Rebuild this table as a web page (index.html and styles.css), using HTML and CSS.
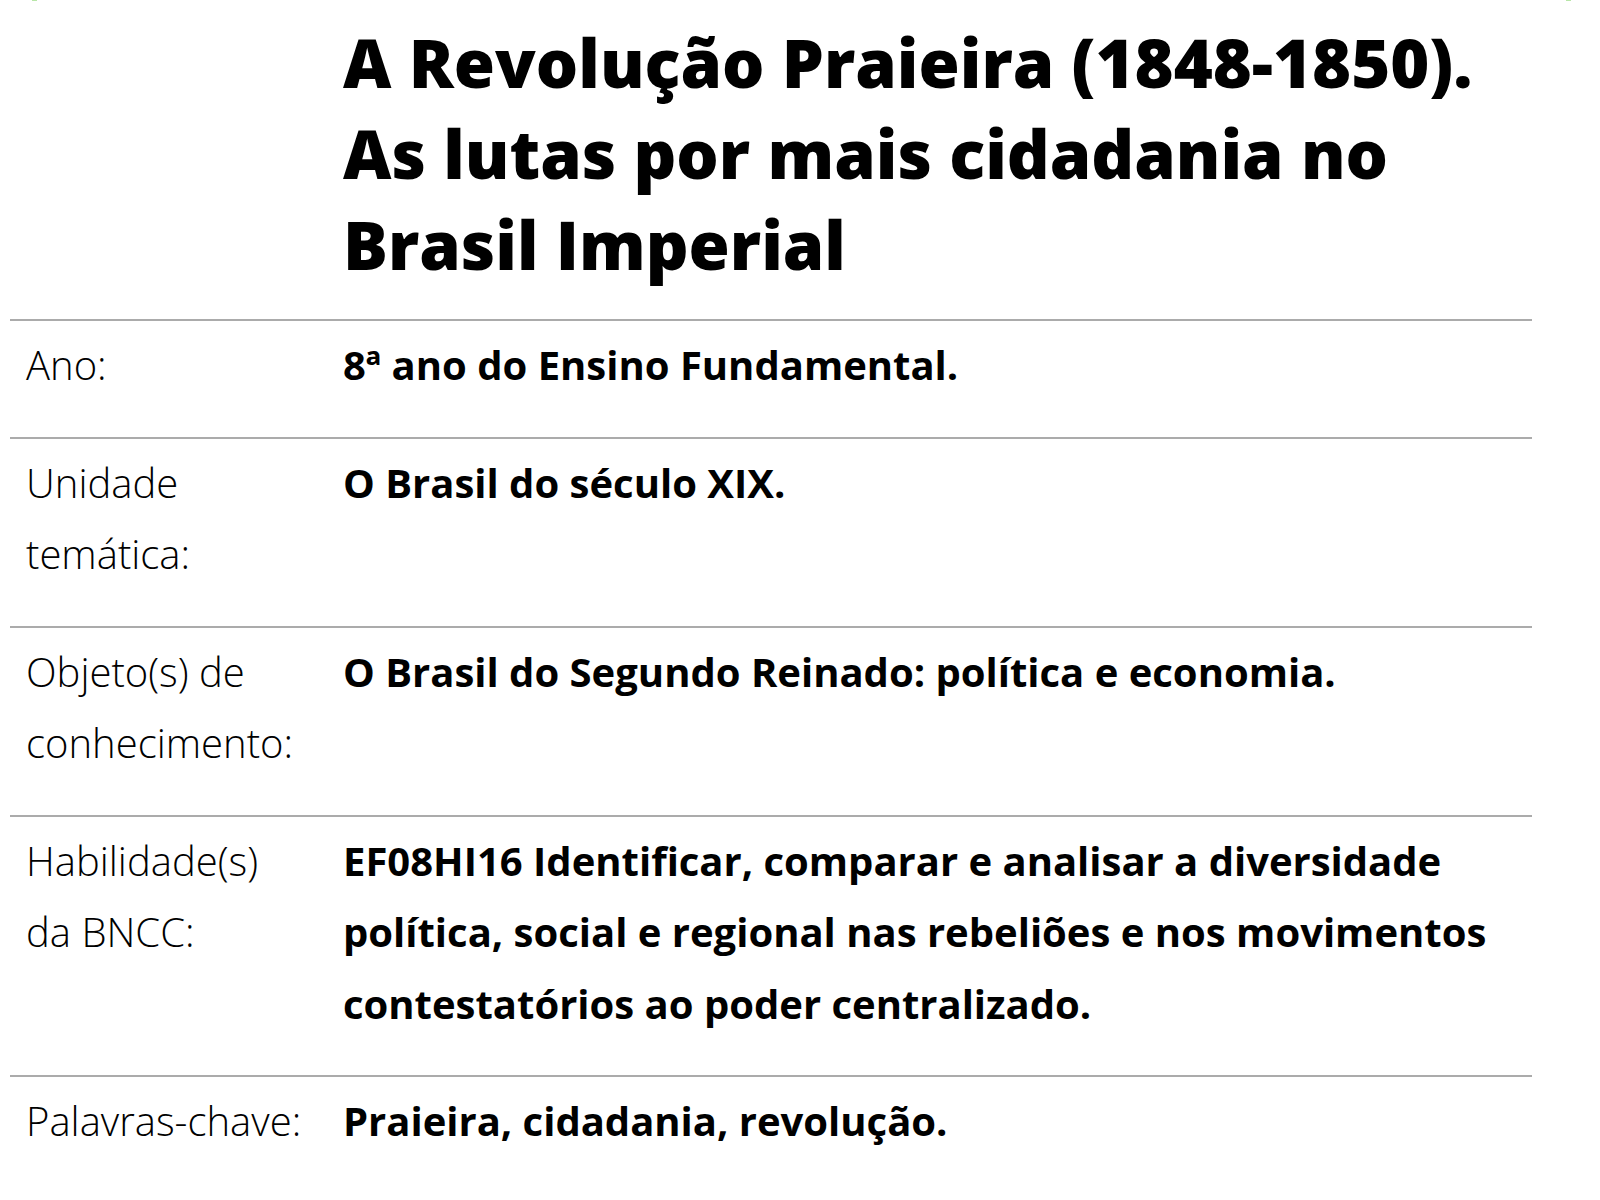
FILE: index.html
```html
<!DOCTYPE html>
<html lang="pt-BR">
<head>
<meta charset="utf-8">
<title>A Revolução Praieira</title>
<link rel="stylesheet" href="styles.css">
</head>
<body>
<div class="edge edge-left"></div>
<div class="edge edge-right"></div>
<main class="page">
  <h1 class="title">A Revolução Praieira (1848-1850).<br>As lutas por mais cidadania no<br>Brasil Imperial</h1>
  <div class="info">
    <div class="row">
      <div class="label">Ano:</div>
      <div class="value">8ª ano do Ensino Fundamental.</div>
    </div>
    <div class="row">
      <div class="label">Unidade<br>temática:</div>
      <div class="value">O Brasil do século XIX.</div>
    </div>
    <div class="row">
      <div class="label">Objeto(s) de<br>conhecimento:</div>
      <div class="value">O Brasil do Segundo Reinado: política e economia.</div>
    </div>
    <div class="row">
      <div class="label">Habilidade(s)<br>da BNCC:</div>
      <div class="value">EF08HI16 Identificar, comparar e analisar a diversidade<br>política, social e regional nas rebeliões e nos movimentos<br>contestatórios ao poder centralizado.</div>
    </div>
    <div class="row">
      <div class="label">Palavras-chave:</div>
      <div class="value">Praieira, cidadania, revolução.</div>
    </div>
  </div>
</main>
</body>
</html>
```

FILE: styles.css
```css
html, body {
  margin: 0;
  padding: 0;
  background: #ffffff;
}
body {
  font-family: "Open Sans", "DejaVu Sans", sans-serif;
  color: #000;
}
.edge {
  position: absolute;
  top: 0;
  width: 5px;
  height: 1px;
  background: #b8e6a8;
}
.edge-left { left: 32px; }
.edge-right { left: 1566px; }
.page {
  padding: 17px 0 0 10px;
  width: 1522px;
}
.title {
  margin: 0 0 29px 333px;
  font-size: 66.7px;
  line-height: 91px;
  font-weight: 800;
}
.info {
  display: flex;
  flex-direction: column;
}
.row {
  display: grid;
  grid-template-columns: 317px 1fr;
  border-top: 2px solid #ababab;
  padding: 8px 0 36px 0;
  font-size: 40px;
  line-height: 71.5px;
}
.label {
  padding-left: 16px;
  font-weight: 300;
}
.value {
  padding-left: 16px;
  font-weight: 700;
}
```
